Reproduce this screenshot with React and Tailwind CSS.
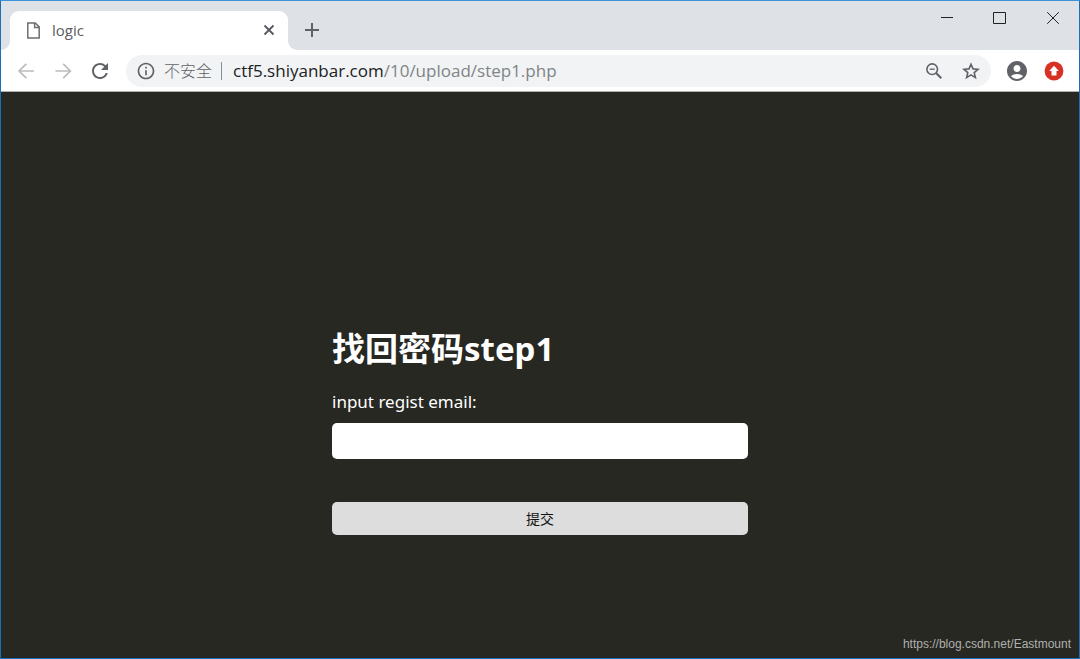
import { MdRefresh, MdInfoOutline, MdAccountCircle } from 'react-icons/md';

function Tab() {
  return (
    <div className="relative ml-[9px] mt-[10px] flex h-[39px] w-[278px] items-center rounded-t-[9px] bg-white pb-px pl-[17px] pr-[13px]">
      <svg className="absolute bottom-0 -left-[9px]" width="9" height="9" viewBox="0 0 9 9" aria-hidden="true">
        <path d="M9 0A9 9 0 0 1 0 9H9Z" fill="#fff" />
      </svg>
      <svg className="absolute bottom-0 -right-[9px]" width="9" height="9" viewBox="0 0 9 9" aria-hidden="true">
        <path d="M0 0A9 9 0 0 0 9 9H0Z" fill="#fff" />
      </svg>
      <svg width="13" height="17" viewBox="0 0 13 17" fill="none" stroke="#6e6e6e" strokeWidth="1.5" aria-hidden="true">
        <path d="M0.8 0.9H8.2L12.2 4.9V16H0.8Z" />
        <path d="M7.6 0.9V5.4H12.2" />
      </svg>
      <span className="ml-3 flex-1 font-['Open_Sans',sans-serif] text-[15px] leading-5 text-[#5a5d61]">logic</span>
      <button type="button" aria-label="Close tab">
        <svg width="12" height="12" viewBox="0 0 12 12" stroke="#55585c" strokeWidth="1.8" aria-hidden="true">
          <path d="M1.5 1.5L10.5 10.5M10.5 1.5L1.5 10.5" />
        </svg>
      </button>
    </div>
  );
}

function TitleBar() {
  return (
    <header className="flex h-[49px] items-start bg-[#dee1e6]">
      <Tab />
      <button type="button" aria-label="New tab" className="ml-4 mt-[21px]">
        <svg width="16" height="16" viewBox="0 0 16 16" stroke="#5f6368" strokeWidth="2" aria-hidden="true">
          <path d="M8 1V15M1 8H15" />
        </svg>
      </button>
      <div className="ml-auto mr-[19px] mt-[10px] flex gap-[39px] text-[#222]">
        <button type="button" aria-label="Minimize">
          <svg width="14" height="14" viewBox="0 0 14 14" stroke="currentColor" aria-hidden="true">
            <path d="M1 6.5H13" />
          </svg>
        </button>
        <button type="button" aria-label="Maximize">
          <svg width="14" height="14" viewBox="0 0 14 14" fill="none" stroke="currentColor" aria-hidden="true">
            <path d="M0.5 1.5H12.5V12.5H0.5Z" />
          </svg>
        </button>
        <button type="button" aria-label="Close">
          <svg width="14" height="14" viewBox="0 0 14 14" stroke="currentColor" aria-hidden="true">
            <path d="M1.2 1.2L12.8 12.8M12.8 1.2L1.2 12.8" />
          </svg>
        </button>
      </div>
    </header>
  );
}

function Toolbar() {
  return (
    <nav className="flex h-[42px] items-center border-b border-[#b0b0ae] bg-white pl-[13px] pr-[15px] text-[#5f6368]">
      <button type="button" aria-label="Back" className="text-[#babcbe]">
        <svg width="24" height="24" viewBox="0 0 24 24" fill="none" stroke="currentColor" strokeWidth="1.7" aria-hidden="true">
          <path d="M20 12H5.5M12.3 4.8L5.1 12L12.3 19.2" />
        </svg>
      </button>
      <button type="button" aria-label="Forward" className="ml-[13px] text-[#babcbe]">
        <svg width="24" height="24" viewBox="0 0 24 24" fill="none" stroke="currentColor" strokeWidth="1.7" aria-hidden="true">
          <path d="M4.5 12H19M12.2 4.8L19.4 12L12.2 19.2" />
        </svg>
      </button>
      <button type="button" aria-label="Reload" className="ml-[13px]"><MdRefresh size={24} /></button>
      <div className="ml-[14px] flex h-8 flex-1 items-center rounded-full bg-[#f1f3f4] pl-[10px] pr-[10px]">
        <MdInfoOutline size={20} />
        <span className="ml-2 text-[16px] font-light leading-6">不安全</span>
        <span className="ml-[9px] h-[18px] w-px bg-[#8a8d91]" />
        <span className="ml-[11px] flex-1 font-['Open_Sans',sans-serif] text-[17px] leading-6 text-[#808488]">
          <span className="text-[#202124]">ctf5.shiyanbar.com</span>/10/upload/step1.php
        </span>
        <button type="button" aria-label="Zoom">
          <svg width="20" height="20" viewBox="0 0 20 20" fill="none" stroke="currentColor" strokeWidth="1.6" aria-hidden="true">
            <circle cx="8.2" cy="8.2" r="5.3" />
            <path d="M5.7 8.2H10.7" strokeWidth="1.3" />
            <path d="M12 12L17.3 17.3" strokeWidth="2" />
          </svg>
        </button>
        <button type="button" aria-label="Bookmark" className="ml-[17px]">
          <svg width="20" height="20" viewBox="0 0 20 20" fill="none" stroke="currentColor" strokeWidth="1.6" aria-hidden="true">
            <path d="M10 3.2L12 7.9L17 8.3L13.2 11.6L14.4 16.6L10 13.9L5.6 16.6L6.8 11.6L3 8.3L8 7.9Z" />
          </svg>
        </button>
      </div>
      <button type="button" aria-label="Profile" className="ml-[14px]"><MdAccountCircle size={24} /></button>
      <button type="button" aria-label="Update" className="ml-[15px]">
        <svg width="20" height="20" viewBox="0 0 20 20" aria-hidden="true">
          <circle cx="10" cy="10" r="9.4" fill="#d93025" />
          <path d="M10 4.8L14.8 10H12.5V14.6H7.5V10H5.2Z" fill="#fff" />
        </svg>
      </button>
    </nav>
  );
}

export default function App() {
  return (
    <div className="flex min-h-screen flex-col border border-t-[#3c93dc] border-x-[#1a70b8] border-b-[#1a70b8] bg-[#272822] font-['Noto_Sans','Noto_Sans_CJK_SC',sans-serif]">
      <TitleBar />
      <Toolbar />
      <main className="flex flex-1 flex-col px-2 pb-1">
        <form className="mx-auto mt-[233px] flex w-full max-w-[416px] flex-col text-white" onSubmit={(e) => e.preventDefault()}>
          <h1 className="text-[33px] font-bold leading-12">找回密码step1</h1>
          <label htmlFor="email" className="mt-[17px] text-[17px] leading-6">input regist email:</label>
          <input id="email" type="text" className="mt-[9px] h-9 rounded-[5px] bg-white px-3 text-black" />
          <button type="submit" className="mt-[43px] h-[33px] rounded-[5px] bg-[#ddd] text-[14px] text-[#111]">提交</button>
        </form>
        <p className="mt-auto text-right font-['Liberation_Sans',sans-serif] text-[12px] leading-5 text-[#b0b0ae]">https://blog.csdn.net/Eastmount</p>
      </main>
    </div>
  );
}
